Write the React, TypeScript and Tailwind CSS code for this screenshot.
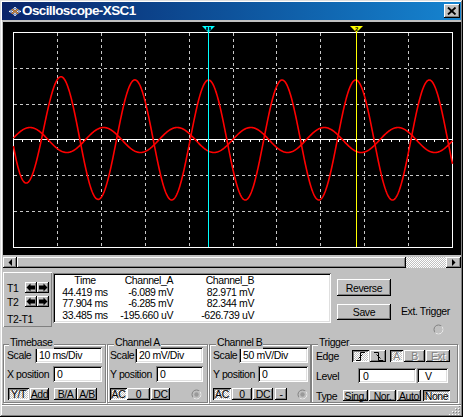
import React from "react";

const raised =
  "bg-[#c0c0c0] shadow-[inset_-1px_-1px_#000,inset_1px_1px_#fff,inset_-2px_-2px_#808080]";
const pressed =
  "bg-[#c0c0c0] bg-[image:repeating-conic-gradient(#fff_0_25%,#c0c0c0_0_50%)] bg-[length:2px_2px] shadow-[inset_1px_1px_#000,inset_-1px_-1px_#fff,inset_2px_2px_#808080]";
const sunken =
  "bg-white shadow-[inset_1px_1px_#808080,inset_-1px_-1px_#fff,inset_2px_2px_#000,inset_-2px_-2px_#dfdfdf]";
const etched = "border border-[#808080] shadow-[inset_1px_1px_#fff,1px_1px_#fff]";
const dither =
  "bg-[image:repeating-conic-gradient(#fff_0_25%,#c0c0c0_0_50%)] bg-[length:2px_2px]";
const disabled = "text-[#808080] [text-shadow:1px_1px_#fff]";

function Btn({
  className = "",
  on = false,
  children,
}: {
  className?: string;
  on?: boolean;
  children?: React.ReactNode;
}) {
  return (
    <div className={`${on ? pressed : raised} flex items-center justify-center ${className}`}>
      {children}
    </div>
  );
}

function Field({ className = "", children }: { className?: string; children: React.ReactNode }) {
  return <div className={`${sunken} flex items-center ${className}`}>{children}</div>;
}

function Group({
  title,
  className = "",
  legend = "left-[5px]",
  children,
}: {
  title: string;
  className?: string;
  legend?: string;
  children: React.ReactNode;
}) {
  return (
    <div className={`relative h-[59px] ${etched} ${className}`}>
      <span className={`absolute -top-[9px] ${legend} bg-[#c0c0c0] px-[1px] leading-[13px]`}>
        {title}
      </span>
      {children}
    </div>
  );
}

function Terminal({ dot = false }: { dot?: boolean }) {
  return (
    <svg width="11" height="11" viewBox="0 0 11 11">
      <circle cx="5.5" cy="5.5" r="4.5" fill="#c0c0c0" stroke="#808080" />
      <path d="M8.7 2.3A4.5 4.5 0 0 1 2.3 8.7" stroke="#fff" fill="none" />
      {dot && <circle cx="5.5" cy="5.5" r="2.2" fill="#9a9a9a" />}
    </svg>
  );
}

function Arrow({ dir }: { dir: "l" | "r" }) {
  return (
    <Btn className="w-[12px] h-[11px]">
      <svg width="10" height="9" viewBox="0 0 10 9">
        <polygon
          points={
            dir === "l"
              ? "0.5,4.5 4.5,0.5 4.5,2.5 9,2.5 9,6.5 4.5,6.5 4.5,8.5"
              : "9.5,4.5 5.5,0.5 5.5,2.5 1,2.5 1,6.5 5.5,6.5 5.5,8.5"
          }
          fill="#000"
        />
      </svg>
    </Btn>
  );
}

function TitleIcon() {
  const cells: React.ReactNode[] = [];
  for (let i = 0; i < 5; i++)
    for (let j = 0; j < 5; j++) {
      const cx = 7 + (i - j) * 1.3 + 1;
      const cy = 1 + (i + j) * 0.95;
      const c = i === 2 || j === 2 ? "#e89028" : (i + j) % 2 ? "#8fa8d8" : "#ffffff";
      cells.push(<rect key={`${i}-${j}`} x={cx - 0.8} y={cy} width="1.6" height="1.3" fill={c} />);
    }
  return (
    <svg width="14" height="11" viewBox="0 0 14 11">
      {cells}
    </svg>
  );
}

function Scope() {
  const P = 73.6;
  const big = (x: number) =>
    140 - 60 * Math.cos((2 * Math.PI * (x - 208.5)) / P) - 15 * Math.exp(-(x - 28) / 21.7);
  const small = (x: number) => 140 + 12.5 * Math.cos((2 * Math.PI * (x - 214)) / P);
  const trace = (f: (x: number) => number) => {
    const pts: string[] = [];
    for (let x = 13.5; x <= 452.5; x += 0.5) pts.push(`${x},${f(x).toFixed(2)}`);
    return pts.join(" ");
  };
  const vx = Array.from({ length: 9 }, (_, i) => Math.round(13 + 43.9 * (i + 1)) + 0.5);
  const hy = [68.5, 104.5, 175.5, 211.5];
  const ticks = Array.from({ length: 51 }, (_, i) => Math.round(13 + 8.78 * i) + 0.5);

  return (
    <svg width="458" height="233" viewBox="3 22 458 233" className="block">
      <rect x="3" y="22" width="458" height="233" fill="#000" />
      <g stroke="#c8c8c8" strokeDasharray="3 3" shapeRendering="crispEdges">
        {vx.map((x) => (
          <line key={x} x1={x} y1={33} x2={x} y2={247} />
        ))}
        {hy.map((y) => (
          <line key={y} x1={14} y1={y} x2={452} y2={y} />
        ))}
      </g>
      <g stroke="#fff" shapeRendering="crispEdges">
        <line x1={13} y1={139.5} x2={453} y2={139.5} />
        {ticks.map((x) => (
          <line key={x} x1={x} y1={139} x2={x} y2={142} />
        ))}
        <rect x="13.5" y="32.5" width="439" height="215" fill="none" />
      </g>
      <g fill="none" stroke="#ff0000" strokeWidth="1.6" strokeLinejoin="round">
        <polyline points={trace(small)} />
        <polyline points={trace(big)} />
      </g>
      <g shapeRendering="crispEdges">
        <line x1={208.5} y1={32} x2={208.5} y2={247} stroke="#00ffff" />
        <line x1={356.5} y1={32} x2={356.5} y2={247} stroke="#ffff00" />
      </g>
      <polygon points="202,26 215,26 208.5,32.5" fill="#00ffff" />
      <rect x="206" y="27" width="5" height="3.5" fill="#003040" />
      <line x1={208.5} y1={27} x2={208.5} y2={31} stroke="#00ffff" />
      <polygon points="350,26 363,26 356.5,32.5" fill="#ffff00" />
      <text
        x="356.5"
        y="31"
        fontSize="6"
        fontWeight="bold"
        textAnchor="middle"
        fill="#000"
        fontFamily="Liberation Sans, sans-serif"
      >
        2
      </text>
    </svg>
  );
}

function Grip() {
  const dots: React.ReactNode[] = [];
  for (let r = 0; r < 4; r++)
    for (let c = 3 - r; c < 4; c++) {
      dots.push(<rect key={`w${r}${c}`} x={c * 3} y={r * 3} width="1" height="1" fill="#fff" />);
      dots.push(
        <rect key={`g${r}${c}`} x={c * 3 + 1} y={r * 3 + 1} width="1" height="1" fill="#808080" />,
      );
    }
  return (
    <svg width="12" height="12" viewBox="0 0 12 12">
      {dots}
    </svg>
  );
}

const rows = [
  ["44.419 ms", "-6.089 mV", "82.971 mV"],
  ["77.904 ms", "-6.285 mV", "82.344 mV"],
  ["33.485 ms", "-195.660 uV", "-626.739 uV"],
];

export default function App() {
  return (
    <div className="w-[463px] h-[417px] overflow-hidden whitespace-nowrap bg-[#c0c0c0] p-[2px] flex flex-col text-[10.5px] tracking-[-0.4px] leading-[12px] text-black font-['Liberation_Sans',Arial,sans-serif] shadow-[inset_-1px_-1px_#000,inset_1px_1px_#dfdfdf,inset_-2px_-2px_#808080,inset_2px_2px_#fff]">
      {/* title bar */}
      <div className="h-[18px] shrink-0 flex items-center bg-linear-to-r from-[#0a246a] to-[#1684d0]">
        <div className="ml-[5px]">
          <TitleIcon />
        </div>
        <span className="ml-[1px] text-white font-bold text-[13.5px] tracking-[-0.6px] leading-[16px]">
          Oscilloscope-XSC1
        </span>
        <Btn className="ml-auto mr-[1px] w-[16px] h-[14px]">
          <svg width="10" height="8" viewBox="0 0 10 8">
            <path d="M1 0.5L8.5 7.5M8.5 0.5L1 7.5" stroke="#000" strokeWidth="1.8" />
          </svg>
        </Btn>
      </div>

      {/* display */}
      <div className="mt-[2px] ml-[1px] h-[233px] shrink-0">
        <Scope />
      </div>

      {/* scrollbar */}
      <div className="mt-[2px] ml-[1px] h-[11px] shrink-0 flex">
        <Btn className="w-[14px] h-full">
          <svg width="4" height="7" viewBox="0 0 4 7">
            <path d="M4 0V7L0.5 3.5Z" fill="#000" />
          </svg>
        </Btn>
        <div className={`w-[389px] h-full ${raised}`} />
        <div className={`w-[40px] h-full ${dither}`} />
        <Btn className="w-[15px] h-full">
          <svg width="4" height="7" viewBox="0 0 4 7">
            <path d="M0 0V7L3.5 3.5Z" fill="#000" />
          </svg>
        </Btn>
      </div>

      {/* readouts */}
      <div className="mt-[4px] ml-[1px] h-[55px] shrink-0 flex items-start">
        <div className="w-[49px] h-[55px] flex flex-col pl-[4px] pt-[10px] shadow-[inset_1px_1px_#fff,inset_-1px_-1px_#808080]">
          <div className="flex items-center h-[11px]">
            <span className="w-[18px]">T1</span>
            <Arrow dir="l" />
            <Arrow dir="r" />
          </div>
          <div className="flex items-center h-[11px] mt-[3px]">
            <span className="w-[18px]">T2</span>
            <Arrow dir="l" />
            <Arrow dir="r" />
          </div>
          <div className="mt-[6px]">T2-T1</div>
        </div>

        <div className={`ml-[1px] mt-[1px] w-[278px] h-[50px] ${sunken} pt-[2px] pl-[2px]`}>
          <div className="grid grid-cols-[60px_58px_81px] leading-[11.7px]">
            <span className="text-center">Time</span>
            <span className="text-right">Channel_A</span>
            <span className="text-right">Channel_B</span>
            {rows.map((r) => (
              <React.Fragment key={r[0]}>
                <span className="text-center">{r[0]}</span>
                <span className="text-right">{r[1]}</span>
                <span className="text-right">{r[2]}</span>
              </React.Fragment>
            ))}
          </div>
        </div>

        <div className="ml-[6px] w-[54px] flex flex-col">
          <Btn className="mt-[7px] h-[17px]">Reverse</Btn>
          <Btn className="mt-[8px] h-[16px]">Save</Btn>
        </div>

        <div className="ml-[10px] flex flex-col pt-[33px]">
          <span>Ext. Trigger</span>
          <div className="ml-[32px] mt-[7px]">
            <Terminal />
          </div>
        </div>
      </div>

      {/* controls */}
      <div className="mt-[17px] ml-[1px] shrink-0 flex">
        <Group title="Timebase" className="w-[103px]">
          <div className="mt-[2px] pl-[3px] pr-[3px] h-[16px] flex items-center">
            <span>Scale</span>
            <Field className="ml-auto w-[67px] h-[16px] pl-[4px]">10 ms/Div</Field>
          </div>
          <div className="mt-[3px] pl-[3px] pr-[3px] h-[16px] flex items-center">
            <span>X position</span>
            <Field className="ml-auto w-[49px] h-[16px] pl-[4px]">0</Field>
          </div>
          <div className="mt-[6px] pl-[4px] h-[12px] flex">
            <Btn on className="w-[21px] h-full">
              Y/T
            </Btn>
            <Btn className="ml-[1px] w-[19px] h-full">Add</Btn>
            <Btn className="ml-[5px] w-[23px] h-full">B/A</Btn>
            <Btn className="w-[20px] h-full">A/B</Btn>
          </div>
        </Group>

        <Group title="Channel A" className="ml-[1px] w-[101px]" legend="left-[6px]">
          <div className="mt-[2px] pl-[2px] pr-[4px] h-[16px] flex items-center">
            <span>Scale</span>
            <Field className="ml-auto w-[68px] h-[16px] pl-[4px]">20 mV/Div</Field>
          </div>
          <div className="mt-[3px] pl-[2px] pr-[4px] h-[16px] flex items-center">
            <span>Y position</span>
            <Field className="ml-auto w-[47px] h-[16px] pl-[4px]">0</Field>
          </div>
          <div className="mt-[6px] pl-[2px] pr-[5px] h-[12px] flex items-center">
            <Btn on className="w-[17px] h-full">
              AC
            </Btn>
            <Btn className="w-[23px] h-full">0</Btn>
            <Btn className="ml-[1px] w-[19px] h-full">DC</Btn>
            <div className="ml-auto">
              <Terminal dot />
            </div>
          </div>
        </Group>

        <Group title="Channel B" className="ml-[1px] w-[102px]" legend="left-[6px]">
          <div className="mt-[2px] pl-[3px] pr-[2px] h-[16px] flex items-center">
            <span>Scale</span>
            <Field className="ml-auto w-[69px] h-[16px] pl-[4px]">50 mV/Div</Field>
          </div>
          <div className="mt-[3px] pl-[3px] pr-[2px] h-[16px] flex items-center">
            <span>Y position</span>
            <Field className="ml-auto w-[50px] h-[16px] pl-[4px]">0</Field>
          </div>
          <div className="mt-[6px] pl-[3px] pr-[2px] h-[12px] flex items-center">
            <Btn on className="w-[18px] h-full">
              AC
            </Btn>
            <Btn className="ml-[1px] w-[20px] h-full">0</Btn>
            <Btn className="ml-[1px] w-[20px] h-full">DC</Btn>
            <Btn className="ml-[2px] w-[12px] h-full">-</Btn>
            <div className="ml-auto">
              <Terminal dot />
            </div>
          </div>
        </Group>

        <Group title="Trigger" className="w-[147px]" legend="left-[6px]">
          <div className="mt-[5px] pl-[4px] h-[12px] flex items-center">
            <span className="w-[36px]">Edge</span>
            <Btn on className="w-[17px] h-full">
              <svg width="11" height="9" viewBox="0 0 11 9">
                <path d="M1 8.5H5.5V0.5H10M3.5 6.5L7.5 2.5" stroke="#000" fill="none" />
              </svg>
            </Btn>
            <Btn className="ml-[1px] w-[16px] h-full">
              <svg width="11" height="9" viewBox="0 0 11 9">
                <path d="M1 0.5H5.5V8.5H10M3.5 2.5L7.5 6.5" stroke="#000" fill="none" />
              </svg>
            </Btn>
            <Btn on className={`ml-[4px] w-[13px] h-full ${disabled}`}>
              A
            </Btn>
            <Btn className={`ml-[1px] w-[21px] h-full ${disabled}`}>B</Btn>
            <Btn className={`ml-[1px] w-[24px] h-full ${disabled}`}>Ext</Btn>
          </div>
          <div className="mt-[6px] pl-[4px] h-[15px] flex items-center">
            <span className="w-[42px]">Level</span>
            <Field className="w-[58px] h-[15px] pl-[5px]">0</Field>
            <Field className="ml-[1px] w-[31px] h-[15px] pl-[8px]">V</Field>
          </div>
          <div className="mt-[7px] pl-[4px] h-[11px] flex items-center">
            <span className="w-[27px]">Type</span>
            <Btn className="w-[25px] h-full">Sing.</Btn>
            <Btn className="ml-[1px] w-[27px] h-full">Nor.</Btn>
            <Btn className="ml-[1px] w-[24px] h-full">Auto</Btn>
            <Btn on className="ml-[2px] w-[27px] h-full">
              None
            </Btn>
          </div>
        </Group>
      </div>

      {/* status strip */}
      <div className="mt-[1px] flex-1 border-t border-[#808080] shadow-[inset_0_1px_#fff] flex items-end justify-end">
        <Grip />
      </div>
    </div>
  );
}
